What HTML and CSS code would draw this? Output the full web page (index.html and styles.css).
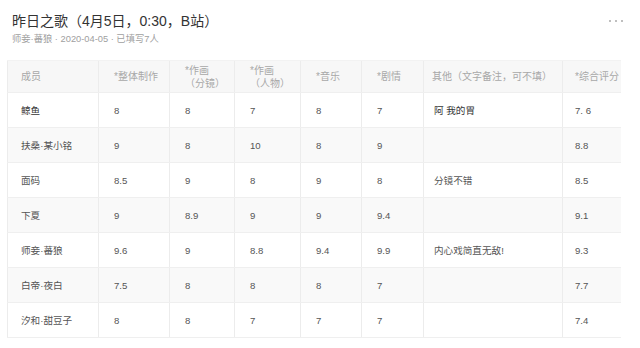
FILE: index.html
```html
<!DOCTYPE html>
<html lang="zh">
<head>
<meta charset="utf-8">
<link rel="stylesheet" href="styles.css">
</head>
<body>
<div class="page">
  <div class="head">
    <div class="title-row">
      <h1 class="title">昨日之歌（4月5日，0:30，B站）</h1>
      <span class="more"><i></i><i></i><i></i></span>
    </div>
    <div class="meta">师妾·蕃狼 · 2020-04-05 · 已填写7人</div>
  </div>
  <div class="table-wrap">
    <table class="grid">
      <colgroup>
        <col class="c1"><col class="c2"><col class="c3"><col class="c4"><col class="c5"><col class="c6"><col class="c7"><col class="c8">
      </colgroup>
      <thead>
        <tr>
          <th>成员</th>
          <th>*整体制作</th>
          <th>*作画<br>（分镜）</th>
          <th>*作画<br>（人物）</th>
          <th>*音乐</th>
          <th>*剧情</th>
          <th class="note">其他（文字备注，可不填）</th>
          <th class="total">*综合评分</th>
        </tr>
      </thead>
      <tbody>
        <tr><td class="name">鲸鱼</td><td>8</td><td>8</td><td>7</td><td>8</td><td>7</td><td class="note dark">阿 我的胃</td><td class="total">7. 6</td></tr>
        <tr><td>扶桑·某小铭</td><td>9</td><td>8</td><td>10</td><td>8</td><td>9</td><td class="note"></td><td class="total">8.8</td></tr>
        <tr><td>面码</td><td>8.5</td><td>9</td><td>8</td><td>9</td><td>8</td><td class="note">分镜不错</td><td class="total">8.5</td></tr>
        <tr><td>下夏</td><td>9</td><td>8.9</td><td>9</td><td>9</td><td>9.4</td><td class="note"></td><td class="total">9.1</td></tr>
        <tr><td>师妾·蕃狼</td><td>9.6</td><td>9</td><td>8.8</td><td>9.4</td><td>9.9</td><td class="note">内心戏简直无敌!</td><td class="total">9.3</td></tr>
        <tr><td>白帝·夜白</td><td>7.5</td><td>8</td><td>8</td><td>8</td><td>7</td><td class="note"></td><td class="total">7.7</td></tr>
        <tr><td>汐和·甜豆子</td><td>8</td><td>8</td><td>7</td><td>7</td><td>7</td><td class="note"></td><td class="total">7.4</td></tr>
      </tbody>
    </table>
  </div>
</div>
</body>
</html>
```
FILE: styles.css
```css
* { box-sizing: border-box; }
html, body { margin: 0; padding: 0; background: #fff; }
body {
  font-family: "Liberation Sans", "Noto Sans CJK SC", sans-serif;
  color: #444;
  width: 640px;
  height: 348px;
  overflow: hidden;
}
.page { padding: 0 0 0 7px; }
.head { padding: 11px 0 0 5px; height: 60px; }
.title-row {
  display: flex;
  justify-content: space-between;
  align-items: flex-start;
  padding-right: 17px;
}
.title {
  margin: 0;
  font-size: 14px;
  line-height: 20px;
  font-weight: normal;
  color: #333;
}
.more {
  display: flex;
  gap: 4px;
  padding-top: 9px;
}
.more i {
  display: block;
  width: 2px;
  height: 2px;
  border-radius: 1px;
  background: #aaa;
}
.meta {
  margin-top: 1px;
  font-size: 9.3px;
  line-height: 14px;
  color: #a0a0a0;
}
.table-wrap { width: 614px; overflow: hidden; }
.grid {
  border-collapse: collapse;
  table-layout: fixed;
  width: 614px;
}
.c1 { width: 91px; }
.c2 { width: 71px; }
.c3 { width: 65px; }
.c4 { width: 66px; }
.c5 { width: 61px; }
.c6 { width: 62px; }
.c7 { width: 139px; }
.c8 { width: 59px; }
.grid th, .grid td {
  border-left: 1px solid #ececec;
  border-bottom: 1px solid #efefef;
  padding: 0 0 0 15px;
  text-align: left;
  vertical-align: middle;
  white-space: nowrap;
}
.grid th:first-child, .grid td:first-child { padding-left: 13px; }
.grid th.note { padding-left: 8px; }
.grid td.note { padding-left: 10px; }
.grid th.total, .grid td.total { padding-left: 12px; }
.grid th {
  height: 32px;
  background: #f7f7f7;
  font-weight: normal;
  font-size: 10px;
  line-height: 13px;
  color: #a8a8a8;
  border-top: 1px solid #f2f2f2;
}
.grid td {
  height: 35px;
  font-size: 9.6px;
  color: #555;
}
.grid tbody tr:nth-child(even) td { background: #f9f9f9; }
.grid td.name, .grid td.dark { color: #333; }
```
